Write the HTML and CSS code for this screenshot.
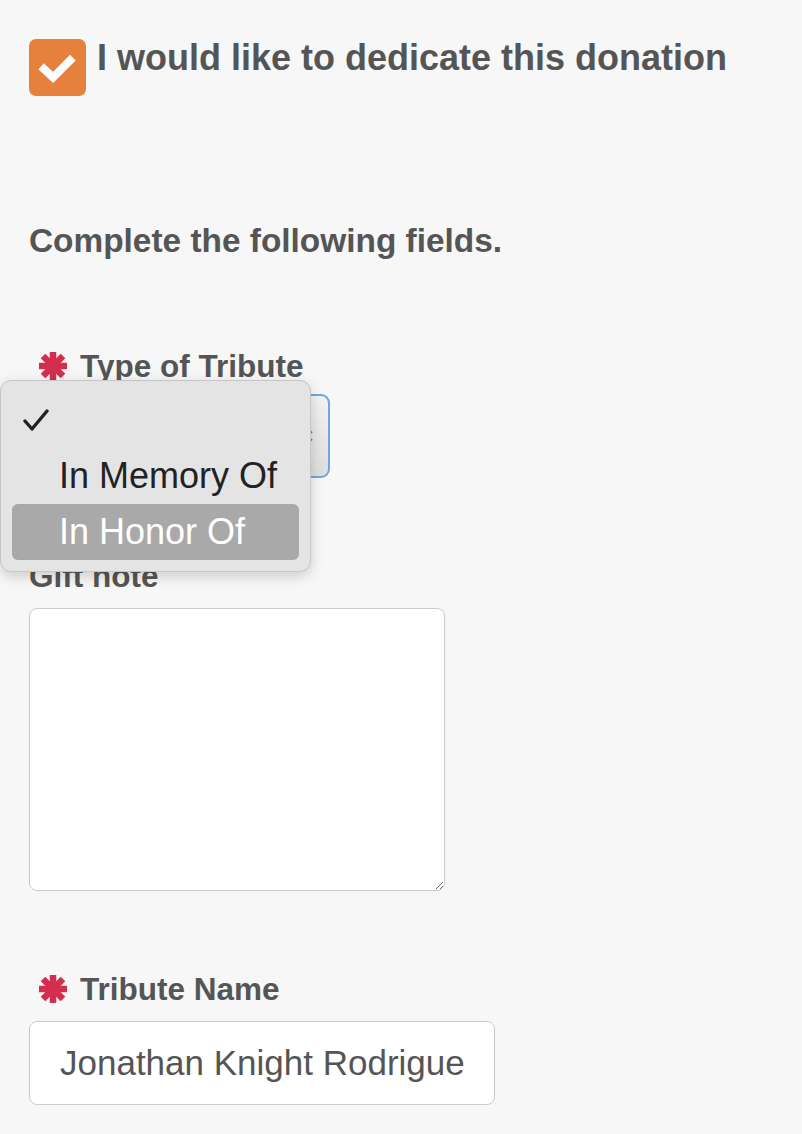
FILE: index.html
```html
<!DOCTYPE html>
<html lang="en">
<head>
    <meta charset="UTF-8">
    <meta name="viewport" content="width=device-width, initial-scale=1.0">
    <title>Dedicate Donation</title>
    <link rel="stylesheet" href="styles.css">
</head>
<body>
    <div class="page">
        <!-- Dedication checkbox -->
        <div class="dedicate-row">
            <span class="check-box">
                <svg viewBox="0 0 57 57" width="57" height="57">
                    <path d="M15 30 L24 38.5 L41 21.5" fill="none" stroke="#fff" stroke-width="8" stroke-linecap="square"/>
                </svg>
            </span>
            <span class="dedicate-text">I would like to dedicate this donation</span>
        </div>

        <h2 class="section-title">Complete the following fields.</h2>

        <!-- Type of Tribute -->
        <div class="field tribute-type">
            <label class="field-label">
                <svg class="required" viewBox="0 0 30 30" width="30" height="30">
                    <g stroke="#d42e4e" stroke-width="6.5">
                        <line x1="15" y1="1" x2="15" y2="29"/>
                        <line x1="1" y1="15" x2="29" y2="15"/>
                        <line x1="5" y1="5" x2="25" y2="25"/>
                        <line x1="25" y1="5" x2="5" y2="25"/>
                    </g>
                </svg>
                Type of Tribute
            </label>
            <div class="select-box">
                <span class="select-arrows">
                    <svg viewBox="0 0 12 22" width="12" height="22">
                        <path d="M2 8 L6 3 L10 8" fill="none" stroke="#777" stroke-width="1.6"/>
                        <path d="M2 14 L6 19 L10 14" fill="none" stroke="#777" stroke-width="1.6"/>
                    </svg>
                </span>
            </div>

            <!-- Open dropdown menu -->
            <ul class="select-menu">
                <li class="menu-item">
                    <svg class="menu-check" viewBox="0 0 28 24" width="28" height="24">
                        <path d="M3 12 L10 20 L25 2" fill="none" stroke="#222" stroke-width="3.4" stroke-linecap="round" stroke-linejoin="round"/>
                    </svg>
                </li>
                <li class="menu-item">In Memory Of</li>
                <li class="menu-item active">In Honor Of</li>
            </ul>
        </div>

        <!-- Gift note -->
        <div class="field note-field">
            <label class="field-label plain" for="giftNote">Gift note</label>
            <textarea id="giftNote" class="note-box"></textarea>
        </div>

        <!-- Tribute Name -->
        <div class="field name-field">
            <label class="field-label" for="tributeName">
                <svg class="required" viewBox="0 0 30 30" width="30" height="30">
                    <g stroke="#d42e4e" stroke-width="6.5">
                        <line x1="15" y1="1" x2="15" y2="29"/>
                        <line x1="1" y1="15" x2="29" y2="15"/>
                        <line x1="5" y1="5" x2="25" y2="25"/>
                        <line x1="25" y1="5" x2="5" y2="25"/>
                    </g>
                </svg>
                Tribute Name
            </label>
            <input type="text" id="tributeName" class="text-input" value="Jonathan Knight Rodriguez">
        </div>
    </div>
</body>
</html>
```

FILE: styles.css
```css
body {
    margin: 0;
    background: #f7f7f7;
    font-family: "Liberation Sans", Arial, sans-serif;
    color: #555;
}

.page {
    padding: 39px 0 0 29px;
}

.dedicate-row {
    display: flex;
    align-items: flex-start;
    gap: 11px;
}

.check-box {
    width: 57px;
    height: 57px;
    border-radius: 7px;
    background: #e5813c;
    display: block;
    flex-shrink: 0;
}

.check-box svg {
    display: block;
}

.dedicate-text {
    font-size: 36px;
    font-weight: bold;
    line-height: 40px;
    margin-top: -1px;
}

.section-title {
    font-size: 33.4px;
    font-weight: bold;
    margin: 125px 0 0;
    line-height: 40px;
}

.field {
    margin-top: 87px;
}

.field-label {
    display: flex;
    align-items: center;
    gap: 12px;
    font-size: 31.5px;
    font-weight: bold;
    line-height: 36px;
    padding-left: 9px;
}

.field-label.plain {
    padding-left: 0;
}

.required {
    display: block;
    flex-shrink: 0;
}

.tribute-type {
    position: relative;
}

.select-box {
    position: relative;
    width: 297px;
    height: 80px;
    margin-top: 10px;
    border: 2px solid #6ea5e3;
    border-radius: 9px;
    background: linear-gradient(#f3f3f3, #dddddd);
}

.select-arrows {
    position: absolute;
    right: 14px;
    top: 29px;
}

.select-menu {
    position: absolute;
    left: -29px;
    top: 32px;
    width: 311px;
    margin: 0;
    padding: 11px;
    list-style: none;
    box-sizing: border-box;
    background: #e4e4e4;
    border: 1px solid #c6c6c6;
    border-radius: 11px;
    box-shadow: 0 4px 14px rgba(0, 0, 0, 0.18);
    z-index: 2;
}

.menu-item {
    height: 56px;
    padding-left: 47px;
    border-radius: 6px;
    font-size: 36px;
    line-height: 56px;
    color: #222;
    position: relative;
}

.menu-check {
    position: absolute;
    left: 10px;
    top: 17px;
}

.menu-item.active {
    background: #a9a9a9;
    color: #fff;
}

.note-field {
    margin-top: 80px;
}

.note-box {
    display: block;
    width: 416px;
    height: 283px;
    margin-top: 14px;
    padding: 0;
    box-sizing: border-box;
    background: #fff;
    border: 1px solid #cacaca;
    border-radius: 8px;
    outline: none;
}

.name-field {
    margin-top: 80px;
}

.text-input {
    display: block;
    width: 466px;
    height: 84px;
    margin: 14px 0 0;
    padding: 0 30px;
    box-sizing: border-box;
    background: #fff;
    border: 1px solid #cacaca;
    border-radius: 8px;
    outline: none;
    font-family: "Liberation Sans", Arial, sans-serif;
    font-size: 35px;
    color: #555;
}
```
